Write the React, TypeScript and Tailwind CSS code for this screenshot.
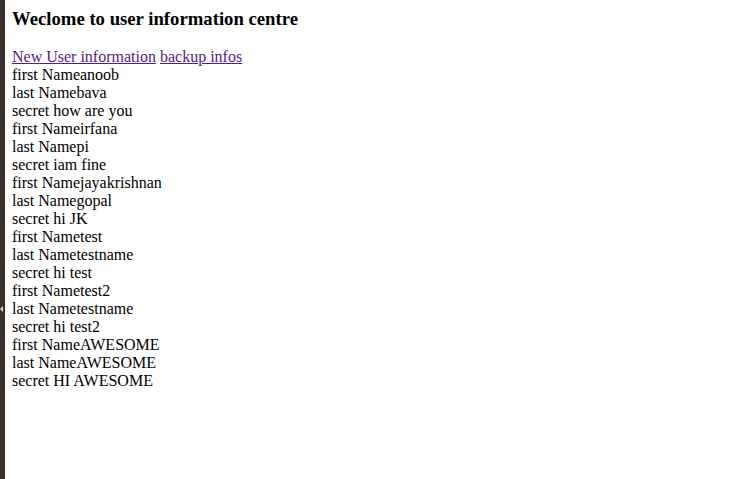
import React from "react";

const rows = [
  "first Nameanoob",
  "last Namebava",
  "secret how are you",
  "first Nameirfana",
  "last Namepi",
  "secret iam fine",
  "first Namejayakrishnan",
  "last Namegopal",
  "secret hi JK",
  "first Nametest",
  "last Nametestname",
  "secret hi test",
  "first Nametest2",
  "last Nametestname",
  "secret hi test2",
  "first NameAWESOME",
  "last NameAWESOME",
  "secret HI AWESOME",
];

export default function App() {
  return (
    <div className="flex w-[729px] h-[479px] bg-white text-black" style={{ fontFamily: '"Liberation Serif", "Times New Roman", serif' }}>
      <div className="relative w-[5px] shrink-0 bg-[#3b312b]">
        <div className="absolute left-[0px] top-[306px] w-0 h-0 border-y-[3px] border-y-transparent border-r-[3px] border-r-[#d8d4d0]" />
      </div>
      <div className="pl-[7px] pt-[8px]">
        <h3 className="text-[18.72px] font-bold leading-[21px] mb-[19px]">Weclome to user information centre</h3>
        <div className="text-[16px] leading-[18px]">
          <div>
            <a href="#" className="text-[#551a8b] underline">New User information</a>{" "}
            <a href="#" className="text-[#551a8b] underline">backup infos</a>
          </div>
          {rows.map((r, i) => (
            <div key={i}>{r}</div>
          ))}
        </div>
      </div>
    </div>
  );
}
